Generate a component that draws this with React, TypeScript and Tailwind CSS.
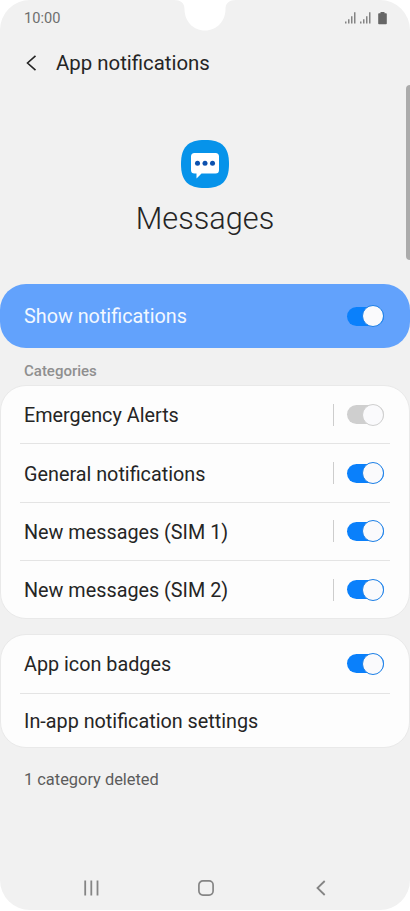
import clsx from "clsx";

type category = {
  label: string;
  enabled: boolean;
}

type toggleProps = {
  on: boolean;
}

type rowProps = {
  label: string;
  on?: boolean;
  separated?: boolean;
  className?: string;
}

const categories: category[] = [
  { label: "Emergency Alerts", enabled: false },
  { label: "General notifications", enabled: true },
  { label: "New messages (SIM 1)", enabled: true },
  { label: "New messages (SIM 2)", enabled: true },
]

const Toggle = ({ on }: toggleProps) => {
  return (
    <div
      role="switch"
      aria-checked={on}
      className={clsx("flex h-[19px] w-[37px] items-center justify-end rounded-full", on ? "bg-[#0a80fb]" : "bg-[#cfcfcf]")}
    >
      <div className={clsx("h-[22px] w-[22px] shrink-0 rounded-full border bg-[#fafafc]", on ? "border-[#1c7fe6]" : "border-[#cfcfcf]")}></div>
    </div>
  )
}

const Row = ({ label, on, separated, className }: rowProps) => {
  return (
    <div className={clsx("mx-[19px] flex items-center border-[#e4e4e4] pr-[6px] pl-[4px]", className)}>
      <p className="flex-1 pt-[3px] text-[19.8px] leading-6 text-[#252525]">{label}</p>
      {separated && <div className="mr-[13px] h-[22px] w-px bg-[#cdcdcd]"></div>}
      {on !== undefined && <Toggle on={on} />}
    </div>
  )
}

const Signal = () => {
  return (
    <svg width="11" height="12" viewBox="0 0 11 12" stroke="#6a6a6a" strokeWidth="1.2">
      <path d="M.8 9.500v2M3.800 7.200v4.300M6.800 4.300v7.200M9.800 .3v11.200" />
    </svg>
  )
}

const StatusBar = () => {
  return (
    <div className="relative flex h-[36px] items-center pr-[23.500px] pl-[24px]">
      <svg className="absolute top-0 left-[174px]" width="62" height="31" viewBox="0 0 62 31" fill="#fff">
        <path d="M0 0C6.500 0 10.500 3 10.500 9C10.500 21 19 30.500 31 30.500S51.500 21 51.500 9C51.500 3 55.500 0 62 0Z" />
      </svg>
      <p className="flex-1 pt-[2px] text-[14.6px] text-[#6e6e6e]">10:00</p>
      <div className="flex items-center gap-[4px]">
        <Signal />
        <Signal />
        <svg className="ml-[3px]" width="9" height="13" viewBox="0 0 9 13" fill="#666">
          <path d="M2.500 0h4v1.200H8a.8.8 0 0 1 .8.800v9.500a.8.8 0 0 1-.8.800H1a.8.8 0 0 1-.8-.800V2a.8.8 0 0 1 .8-.800h1.500z" />
        </svg>
      </div>
    </div>
  )
}

const AppIcon = () => {
  return (
    <svg width="48" height="48" viewBox="0 0 48 48">
      <path d="M24 0C41 0 48 7 48 24S41 48 24 48 0 41 0 24 7 0 24 0Z" fill="#0693ea" />
      <path d="M13.500 13h21a3.500 3.500 0 0 1 3.500 3.500v13.500a3.500 3.500 0 0 1-3.500 3.500H20.500L15.500 38.500V33.500h-2A3.500 3.500 0 0 1 10 30V16.500A3.500 3.500 0 0 1 13.500 13Z" fill="#fff" />
      <g fill="#0d51ae">
        <circle cx="16.500" cy="23.200" r="2.500" />
        <circle cx="24" cy="23.200" r="2.500" />
        <circle cx="31.500" cy="23.200" r="2.500" />
      </g>
    </svg>
  )
}

const NavBar = () => {
  return (
    <div className="mt-auto flex h-[45px] items-center pl-[84px]">
      <svg width="15" height="16" viewBox="0 0 15 16" stroke="#858585" strokeWidth="1.800">
        <path d="M1.200 .5v15M7.300 .5v15M13.500 .5v15" />
      </svg>
      <svg className="ml-[99px]" width="16" height="16" viewBox="0 0 16 16" fill="none" stroke="#858585" strokeWidth="1.700">
        <rect x=".9" y=".9" width="14.200" height="14.200" rx="4" />
      </svg>
      <svg className="ml-[102px]" width="10" height="16" viewBox="0 0 10 16" fill="none" stroke="#858585" strokeWidth="1.800">
        <path d="M8.700 1L1.500 8l7.200 7" />
      </svg>
    </div>
  )
}

export default function App() {
  return (
    <div className="h-[911px] w-[410px] bg-white font-['Roboto',sans-serif]">
      <div className="relative flex h-[910px] flex-col overflow-hidden rounded-[30px] bg-[#f1f1f1]">
        <StatusBar />
        <div className="flex h-[54px] items-center pl-[26px]">
          <svg width="11" height="16" viewBox="0 0 11 16" fill="none" stroke="#252525" strokeWidth="1.600">
            <path d="M9.500 .8L1.500 8l8 7.200" />
          </svg>
          <p className="ml-[19px] text-[20.4px] leading-6 text-[#252525]">App notifications</p>
        </div>
        <div className="absolute top-[85px] right-0 h-[175px] w-[4px] rounded-l-full bg-[#ababab]"></div>

        <div className="flex h-[194px] flex-col items-center pt-[50.400px]">
          <AppIcon />
          <p className="mt-[11.600px] text-[30.7px] leading-[38px] font-light text-[#252525]">Messages</p>
        </div>

        <div className="flex h-[64px] items-center rounded-[26px] bg-[#62a2fc] pr-[26px] pl-[24px]">
          <p className="flex-1 pt-[2px] text-[19.8px] text-[#f2f8ff]">Show notifications</p>
          <Toggle on />
        </div>

        <p className="flex h-[37px] items-center pt-[9px] pl-[24px] text-[15px] font-medium text-[#8f8f8f]">Categories</p>

        <div className="rounded-[26px] border border-[#e9e9e9] bg-[#fdfdfd]">
          {categories.map((item, index) => (
            <Row
              key={item.label}
              label={item.label}
              on={item.enabled}
              separated
              className={index < categories.length - 1 ? "h-[58.4px] border-b" : "h-[56.8px]"}
            />
          ))}
        </div>

        <div className="mt-[15px] rounded-[26px] border border-[#e9e9e9] bg-[#fdfdfd]">
          <Row label="App icon badges" on className="h-[59px] border-b" />
          <Row label="In-app notification settings" className="h-[53px]" />
        </div>

        <p className="mt-[20px] pl-[24px] text-[16.4px] leading-6 text-[#5c5c5c]">1 category deleted</p>
        <NavBar />
      </div>
    </div>
  )
}
